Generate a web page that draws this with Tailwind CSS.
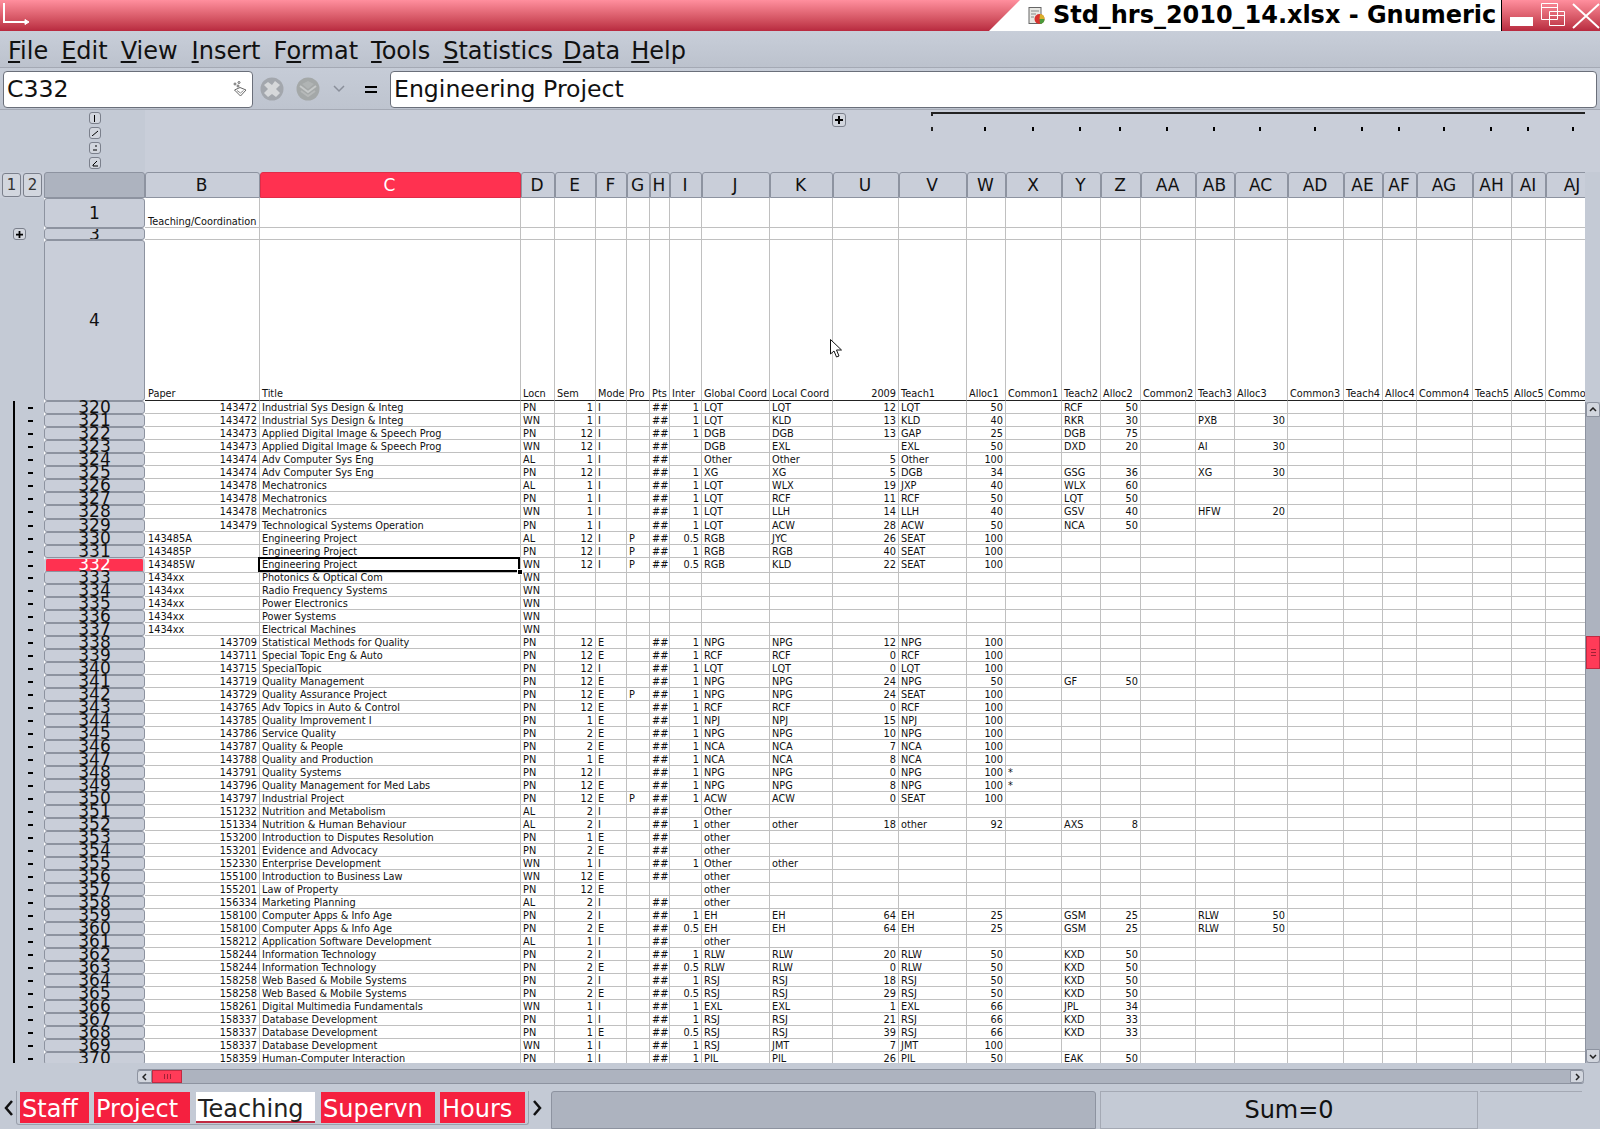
<!DOCTYPE html>
<html lang="en">
<head>
    <meta charset="UTF-8">
    <script src="https://cdn.jsdelivr.net/npm/@tailwindcss/browser@4"></script>
    <title>Std_hrs_2010_14.xlsx - Gnumeric</title>
</head>
<body class="relative w-[1600px] h-[1129px] overflow-hidden flex flex-col bg-[#c4cad5] font-['DejaVu_Sans',sans-serif] text-[#111]">

<!-- title bar -->
<div class="h-[31px] flex bg-linear-to-b from-[#ff8f9e] to-[#b8293f]">
    <div class="w-[989px] pl-[3px] pt-[3px]">
        <svg width="26" height="24" viewBox="0 0 26 24" fill="none" stroke="#fff" stroke-width="2"><path d="M1 0V19H23"/><path d="M22 16.500L26 19L22 21.500Z" fill="#fff" stroke-width="1"/></svg>
    </div>
    <div class="w-[512px] bg-white flex items-center pl-[39px] [clip-path:polygon(31px_0,100%_0,100%_100%,0_100%)]">
        <svg width="17" height="18" viewBox="0 0 17 18" class="mr-[8px] shrink-0"><rect x="1" y="0.5" width="12" height="16" fill="#e8e8e4" stroke="#666"/><path d="M3 4H11M3 7H8M3 10H6" stroke="#888"/><circle cx="11.5" cy="12" r="5" fill="#d8322e"/><path d="M11.5 12L16.5 12A5 5 0 0 1 12 17Z" fill="#4a9a3a"/><path d="M11.5 12L12 7A5 5 0 0 1 16.5 12Z" fill="#d9b02c"/></svg>
        <span class="text-[24px] font-bold leading-[31px] tracking-[-0.03px] whitespace-nowrap text-black">Std_hrs_2010_14.xlsx - Gnumeric</span>
    </div>
    <div class="flex-1 border-l border-black relative">
        <svg width="98" height="31" viewBox="0 0 98 31" fill="none" stroke="#fff"><rect x="8" y="17" width="23" height="9" fill="#fff" stroke="none"/><path d="M39.500 3.500H55.500V19.500H39.500Z"/><path d="M39.500 7.500H55.500"/><path d="M47.500 11.500H62.500V25.500H47.500Z"/><path d="M47.500 15.500H62.500"/><path d="M71 4L97 28M97 4L71 28" stroke-width="2"/></svg>
    </div>
</div>

<!-- menu -->
<div class="h-[37px] flex items-center bg-linear-to-b from-[#c8ced9] to-[#bcc2cd] border-b border-[#a4a9b4] text-[24px] leading-[32px] whitespace-nowrap pt-[4px]">
    <span class="ml-[8px]"><u>F</u>ile</span>
    <span class="ml-[13px]"><u>E</u>dit</span>
    <span class="ml-[13px]"><u>V</u>iew</span>
    <span class="ml-[14px]"><u>I</u>nsert</span>
    <span class="ml-[13px]">F<u>o</u>rmat</span>
    <span class="ml-[13px]"><u>T</u>ools</span>
    <span class="ml-[13px]"><u>S</u>tatistics</span>
    <span class="ml-[10px]"><u>D</u>ata</span>
    <span class="ml-[11px]"><u>H</u>elp</span>
</div>

<!-- formula bar -->
<div class="h-[42px] flex items-center bg-linear-to-b from-[#c6ccd7] to-[#bec4cf] border-b border-[#a4a9b4] pl-[3px] pr-[3px] pt-px">
    <div class="w-[250px] h-[37px] bg-white border border-[#6a6f7a] rounded-[4px] flex items-center justify-between pl-[3px] pr-[5px] text-[23.6px]">
        <span class="mt-[2px]">C332</span>
        <svg width="14" height="16" viewBox="0 0 14 16" fill="none" stroke="#666"><circle cx="2" cy="3" r="1"/><circle cx="6" cy="1.500" r="1"/><circle cx="5" cy="5" r="1"/><path d="M1.500 9L7 6.500L13 9L7.500 15Z"/><path d="M4 9.500L7.500 12L10.500 9.500" stroke="#888"/></svg>
    </div>
    <svg width="24" height="24" viewBox="0 0 24 24" class="ml-[7px]"><circle cx="12" cy="12" r="11.500" fill="#a3a7ad"/><path d="M8 5L12 8L15 4L20 8L16 12L20 16L16 20L12 17L8 20L4 16L8 12L4 8Z" fill="#d6d8da"/></svg>
    <svg width="24" height="24" viewBox="0 0 24 24" class="ml-[12px]"><circle cx="12" cy="12" r="11.500" fill="#a4a8a8"/><path d="M4 9L12 15L20 9" fill="none" stroke="#c6c9c9" stroke-width="2"/><path d="M5 14L12 19L19 14" fill="none" stroke="#b6b9b9" stroke-width="2"/><path d="M6 7L12 4L18 7L12 12Z" fill="#b0b4b4"/></svg>
    <svg width="12" height="8" viewBox="0 0 12 8" fill="none" stroke="#8a8f9a" stroke-width="1.500" class="ml-[13px]"><path d="M1 1L6 6L11 1"/></svg>
    <span class="ml-[20px] w-[12px] flex flex-col gap-[3px]"><i class="block h-[2px] bg-black"></i><i class="block h-[2px] bg-black"></i></span>
    <div class="ml-[13px] flex-1 h-[37px] bg-white border border-[#6a6f7a] rounded-[4px] flex items-center pl-[3px] text-[23.6px] leading-[37px] whitespace-nowrap">Engineering Project</div>
</div>

<!-- column outline area -->
<div class="relative h-[62px] shrink-0 bg-[#c9ced9]">
    <div class="h-full grid grid-cols-[44px_101px_115px_261px_34px_41px_31px_23px_20px_32px_68px_63px_66px_68px_39px_56px_39px_40px_55px_39px_53px_56px_39px_34px_56px_39px_34px_54px]">
        <div class="bg-[#c4cad5]"></div>
        <div class="bg-[#c4cad5] flex flex-col items-center pt-[2px] gap-[3px]">
            <span class="w-[12px] h-[12px] rounded-[3px] border border-[#7b808c] bg-[#d2d6de] flex items-center justify-center"><i class="block w-px h-[7px] bg-black"></i></span>
            <span class="w-[12px] h-[12px] rounded-[3px] border border-[#7b808c] bg-[#d2d6de] flex items-center justify-center"><svg width="6" height="6" viewBox="0 0 6 6" stroke="#000"><path d="M0 6L6 1"/></svg></span>
            <span class="w-[12px] h-[12px] rounded-[3px] border border-[#7b808c] bg-[#d2d6de] flex items-center justify-center"><svg width="6" height="6" viewBox="0 0 6 6" stroke="#000"><path d="M1 5H5M3 1H5"/></svg></span>
            <span class="w-[12px] h-[12px] rounded-[3px] border border-[#7b808c] bg-[#d2d6de] flex items-center justify-center"><svg width="6" height="7" viewBox="0 0 6 7" fill="none" stroke="#000"><path d="M5 1L1 5V6H6"/></svg></span>
        </div>
        <div></div><div></div><div></div><div></div><div></div><div></div><div></div><div></div><div></div><div></div><div></div>
        <div></div>
        <div class="flex justify-center pt-[17px] pr-[3px]"><i class="block w-[2px] h-[4px] bg-black"></i></div>
        <div class="flex justify-center pt-[17px] pr-[3px]"><i class="block w-[2px] h-[4px] bg-black"></i></div>
        <div class="flex justify-center pt-[17px] pr-[3px]"><i class="block w-[2px] h-[4px] bg-black"></i></div>
        <div class="flex justify-center pt-[17px] pr-[3px]"><i class="block w-[2px] h-[4px] bg-black"></i></div>
        <div class="flex justify-center pt-[17px] pr-[3px]"><i class="block w-[2px] h-[4px] bg-black"></i></div>
        <div class="flex justify-center pt-[17px] pr-[3px]"><i class="block w-[2px] h-[4px] bg-black"></i></div>
        <div class="flex justify-center pt-[17px] pr-[3px]"><i class="block w-[2px] h-[4px] bg-black"></i></div>
        <div class="flex justify-center pt-[17px] pr-[3px]"><i class="block w-[2px] h-[4px] bg-black"></i></div>
        <div class="flex justify-center pt-[17px] pr-[3px]"><i class="block w-[2px] h-[4px] bg-black"></i></div>
        <div class="flex justify-center pt-[17px] pr-[3px]"><i class="block w-[2px] h-[4px] bg-black"></i></div>
        <div class="flex justify-center pt-[17px] pr-[3px]"><i class="block w-[2px] h-[4px] bg-black"></i></div>
        <div class="flex justify-center pt-[17px] pr-[3px]"><i class="block w-[2px] h-[4px] bg-black"></i></div>
        <div class="flex justify-center pt-[17px] pr-[3px]"><i class="block w-[2px] h-[4px] bg-black"></i></div>
        <div class="flex justify-start pt-[17px] pl-[26px]"><i class="block w-[2px] h-[4px] bg-black"></i></div>
    </div>
    <span class="absolute left-[832px] top-[3px] w-[14px] h-[14px] rounded-[3px] border border-[#7b808c] bg-[#d2d6de] flex items-center justify-center"><svg width="8" height="8" viewBox="0 0 8 8" fill="#000"><path d="M3 0H5V3H8V5H5V8H3V5H0V3H3Z"/></svg></span>
    <div class="absolute left-[931px] top-[2px] w-[654px] h-[2px] bg-[#222]"></div>
    <div class="absolute left-[931px] top-[2px] w-[2px] h-[4px] bg-[#222]"></div>
    <div class="absolute left-[931px] top-[17px] w-[2px] h-[4px] bg-[#222]"></div>
</div>

<!-- sheet -->
<div class="h-[891px] shrink-0 flex">
    <div class="w-[1585px] overflow-hidden bg-white">
        <div class="h-[26px] grid grid-cols-[44px_101px_115px_261px_34px_41px_31px_23px_20px_32px_68px_63px_66px_68px_39px_56px_39px_40px_55px_39px_53px_56px_39px_34px_56px_39px_34px_54px] bg-[#c9ced9] text-[17px] leading-[24px] text-center" id="colhead">
            <div class="flex gap-[2px] pl-[2px] pt-px text-[#333]">
                <span class="w-[19px] h-[24px] rounded-[3px] border border-[#7b808c] bg-[#d2d6de] text-[15px] leading-[22px]">1</span>
                <span class="w-[19px] h-[24px] rounded-[3px] border border-[#7b808c] bg-[#d2d6de] text-[15px] leading-[22px]">2</span>
            </div>
            <div class="rounded-t-[3px] border border-[#8d93a0] bg-[#adb3bf]"></div>
        </div>
        <div id="rows"></div>
    </div>
    <div class="w-[15px] flex flex-col">
        <div class="h-[230px] shrink-0"></div>
        <div class="flex-1 flex flex-col bg-[#adb3bf] border-l border-[#8d93a0]">
            <div class="h-[15px] shrink-0 rounded-t-[3px] border border-[#8d93a0] bg-[#d2d6de] flex items-center justify-center"><svg width="8" height="5" viewBox="0 0 8 5" fill="none" stroke="#222" stroke-width="1.500"><path d="M1 4L4 1L7 4"/></svg></div>
            <div class="h-[219px] shrink-0"></div>
            <div class="h-[33px] shrink-0 bg-[#ff3b58] border border-[#c02a42] flex flex-col items-center justify-center gap-[2px]"><i class="block w-[5px] h-px bg-[#a02035]"></i><i class="block w-[5px] h-px bg-[#a02035]"></i><i class="block w-[5px] h-px bg-[#a02035]"></i></div>
            <div class="flex-1"></div>
            <div class="h-[14px] shrink-0 rounded-b-[3px] border border-[#8d93a0] bg-[#d2d6de] flex items-center justify-center"><svg width="8" height="5" viewBox="0 0 8 5" fill="none" stroke="#222" stroke-width="1.500"><path d="M1 1L4 4L7 1"/></svg></div>
        </div>
    </div>
</div>

<!-- horizontal scrollbar -->
<div class="h-[28px] shrink-0 pt-[6px] pl-[137px] pr-[16px]">
    <div class="h-[15px] flex bg-[#adb3bf] border-y border-[#8d93a0] rounded-[3px]">
        <div class="w-[15px] rounded-l-[3px] border border-[#8d93a0] bg-[#d2d6de] flex items-center justify-center"><svg width="5" height="8" viewBox="0 0 5 8" fill="none" stroke="#222" stroke-width="1.500"><path d="M4 1L1 4L4 7"/></svg></div>
        <div class="w-[30px] bg-[#ff3b58] border border-[#c02a42] flex items-center justify-center gap-[2px]"><i class="block w-px h-[5px] bg-[#a02035]"></i><i class="block w-px h-[5px] bg-[#a02035]"></i><i class="block w-px h-[5px] bg-[#a02035]"></i></div>
        <div class="flex-1"></div>
        <div class="w-[14px] rounded-r-[3px] border border-[#8d93a0] bg-[#d2d6de] flex items-center justify-center"><svg width="5" height="8" viewBox="0 0 5 8" fill="none" stroke="#222" stroke-width="1.500"><path d="M1 1L4 4L1 7"/></svg></div>
    </div>
</div>

<!-- tabs and status -->
<div class="flex-1 flex items-start">
    <div class="w-[16px] h-[34px] flex items-center justify-center"><svg width="9" height="16" viewBox="0 0 9 16" fill="none" stroke="#111" stroke-width="2.500"><path d="M8 1L2 8L8 15"/></svg></div>
    <div class="w-[513px] h-[34px] flex gap-[5px] pl-[3px] pt-px border-x border-b border-[#9aa0ac] rounded-b-[3px] text-[24px] leading-[35px] whitespace-nowrap">
        <span class="w-[69px] h-[31px] pl-[2px] bg-[#f5203f] text-white">Staff</span>
        <span class="w-[96px] h-[31px] pl-[2px] bg-[#f5203f] text-white">Project</span>
        <span class="w-[119px] h-[31px] pl-[2px] bg-white text-[#222] border-b-2 border-[#c02a42] ml-px">Teaching</span>
        <span class="w-[114px] h-[31px] pl-[2px] bg-[#f5203f] text-white ml-px">Supervn</span>
        <span class="w-[85px] h-[31px] pl-[2px] bg-[#f5203f] text-white">Hours</span>
    </div>
    <div class="w-[16px] h-[34px] flex items-center justify-center"><svg width="9" height="16" viewBox="0 0 9 16" fill="none" stroke="#111" stroke-width="2.500"><path d="M1 1L7 8L1 15"/></svg></div>
    <div class="w-[545px] h-[38px] ml-[6px] bg-[#adb3bf] border border-[#8d93a0] rounded-t-[3px]"></div>
    <div class="w-[378px] h-[38px] ml-[4px] border border-[#a4a9b4] flex items-center justify-center text-[24px]">Sum=0</div>
    <div class="w-[102px] h-px ml-[2px] bg-[#a4a9b4]"></div>
</div>

<!-- mouse pointer -->
<svg class="absolute left-[830px] top-[339px]" width="13" height="19" viewBox="0 0 13 19"><path d="M0.500 0.500V15L4 12L6.500 18L9 17L6.500 11H11.500Z" fill="#fff" stroke="#111"/></svg>

<script>
    const GRID = "grid grid-cols-[44px_101px_115px_261px_34px_41px_31px_23px_20px_32px_68px_63px_66px_68px_39px_56px_39px_40px_55px_39px_53px_56px_39px_34px_56px_39px_34px_54px]"
    const CELL = "border-r border-b border-[#c0c0c0] overflow-hidden whitespace-nowrap px-[2px] text-[9.75px] leading-[14px] text-[#111]"
    const RIGHT = "text-right"
    const cols = ["B","C","D","E","F","G","H","I","J","K","U","V","W","X","Y","Z","AA","AB","AC","AD","AE","AF","AG","AH","AI","AJ"]

    // one line per row, columns in sheet order from B
    const data = `320|143472|Industrial Sys Design & Integ|PN|1|I||##|1|LQT|LQT|12|LQT|50||RCF|50
321|143472|Industrial Sys Design & Integ|WN|1|I||##|1|LQT|KLD|13|KLD|40||RKR|30||PXB|30
322|143473|Applied Digital Image & Speech Prog|PN|12|I||##|1|DGB|DGB|13|GAP|25||DGB|75
323|143473|Applied Digital Image & Speech Prog|WN|12|I||##||DGB|EXL||EXL|50||DXD|20||AI|30
324|143474|Adv Computer Sys Eng|AL|1|I||##||Other|Other|5|Other|100
325|143474|Adv Computer Sys Eng|PN|12|I||##|1|XG|XG|5|DGB|34||GSG|36||XG|30
326|143478|Mechatronics|AL|1|I||##|1|LQT|WLX|19|JXP|40||WLX|60
327|143478|Mechatronics|PN|1|I||##|1|LQT|RCF|11|RCF|50||LQT|50
328|143478|Mechatronics|WN|1|I||##|1|LQT|LLH|14|LLH|40||GSV|40||HFW|20
329|143479|Technological Systems Operation|PN|1|I||##|1|LQT|ACW|28|ACW|50||NCA|50
330|143485A|Engineering Project|AL|12|I|P|##|0.5|RGB|JYC|26|SEAT|100
331|143485P|Engineering Project|PN|12|I|P|##|1|RGB|RGB|40|SEAT|100
332|143485W|Engineering Project|WN|12|I|P|##|0.5|RGB|KLD|22|SEAT|100
333|1434xx|Photonics & Optical Com|WN
334|1434xx|Radio Frequency Systems|WN
335|1434xx|Power Electronics|WN
336|1434xx|Power Systems|WN
337|1434xx|Electrical Machines|WN
338|143709|Statistical Methods for Quality|PN|12|E||##|1|NPG|NPG|12|NPG|100
339|143711|Special Topic Eng & Auto|PN|12|E||##|1|RCF|RCF|0|RCF|100
340|143715|SpecialTopic|PN|12|I||##|1|LQT|LQT|0|LQT|100
341|143719|Quality Management|PN|12|E||##|1|NPG|NPG|24|NPG|50||GF|50
342|143729|Quality Assurance Project|PN|12|E|P|##|1|NPG|NPG|24|SEAT|100
343|143765|Adv Topics in Auto & Control|PN|12|E||##|1|RCF|RCF|0|RCF|100
344|143785|Quality Improvement I|PN|1|E||##|1|NPJ|NPJ|15|NPJ|100
345|143786|Service Quality|PN|2|E||##|1|NPG|NPG|10|NPG|100
346|143787|Quality & People|PN|2|E||##|1|NCA|NCA|7|NCA|100
347|143788|Quality and Production|PN|1|E||##|1|NCA|NCA|8|NCA|100
348|143791|Quality Systems|PN|12|I||##|1|NPG|NPG|0|NPG|100|*
349|143796|Quality Management for Med Labs|PN|12|E||##|1|NPG|NPG|8|NPG|100|*
350|143797|Industrial Project|PN|12|E|P|##|1|ACW|ACW|0|SEAT|100
351|151232|Nutrition and Metabolism|AL|2|I||##||Other
352|151334|Nutrition & Human Behaviour|AL|2|I||##|1|other|other|18|other|92||AXS|8
353|153200|Introduction to Disputes Resolution|PN|1|E||##||other
354|153201|Evidence and Advocacy|PN|2|E||##||other
355|152330|Enterprise Development|WN|1|I||##|1|Other|other
356|155100|Introduction to Business Law|WN|12|E||##||other
357|155201|Law of Property|PN|12|E||||other
358|156334|Marketing Planning|AL|2|I||##||other
359|158100|Computer Apps & Info Age|PN|2|I||##|1|EH|EH|64|EH|25||GSM|25||RLW|50
360|158100|Computer Apps & Info Age|PN|2|E||##|0.5|EH|EH|64|EH|25||GSM|25||RLW|50
361|158212|Application Software Development|AL|1|I||##||other
362|158244|Information Technology|PN|2|I||##|1|RLW|RLW|20|RLW|50||KXD|50
363|158244|Information Technology|PN|2|E||##|0.5|RLW|RLW|0|RLW|50||KXD|50
364|158258|Web Based & Mobile Systems|PN|2|I||##|1|RSJ|RSJ|18|RSJ|50||KXD|50
365|158258|Web Based & Mobile Systems|PN|2|E||##|0.5|RSJ|RSJ|29|RSJ|50||KXD|50
366|158261|Digital Multimedia Fundamentals|WN|1|I||##|1|EXL|EXL|1|EXL|66||JPL|34
367|158337|Database Development|PN|1|I||##|1|RSJ|RSJ|21|RSJ|66||KXD|33
368|158337|Database Development|PN|1|E||##|0.5|RSJ|RSJ|39|RSJ|66||KXD|33
369|158337|Database Development|WN|1|I||##|1|RSJ|JMT|7|JMT|100
370|158359|Human-Computer Interaction|PN|1|I||##|1|PIL|PIL|26|PIL|50||EAK|50`.split("\n")

    const esc = (s) => s.replace(/&/g, "&amp;")

    // column letters
    let head = ""
    cols.forEach((c) => {
        if (c == "C") {
            head += `<div class="rounded-t-[3px] border border-[#e02c48] bg-[#ff3150] text-white pr-[2px]">${c}</div>`
        } else {
            head += `<div class="rounded-t-[3px] border border-[#8d93a0] bg-[#c9ced9] pr-[2px] overflow-hidden">${c}</div>`
        }
    })
    document.getElementById("colhead").insertAdjacentHTML("beforeend", head)

    function gutter(inner) {
        return `<div class="bg-[#c4cad5]">${inner}</div>`
    }
    function rowHead(n, box) {
        return `<div class="${box} rounded-[3px] border border-[#8d93a0] bg-[#c9ced9] text-[17px] text-center">${n}</div>`
    }

    let html = ""

    // rows 1, 3 and 4 are the tall heading rows
    let r1 = `<div class="h-[30px] ${GRID}">` + gutter("") + rowHead("1", "leading-[28px]")
    cols.forEach((c) => {
        r1 += `<div class="${CELL} flex items-end ${c == "B" ? "pl-[3px]" : ""}"><span class="leading-[10px]">${c == "B" ? "Teaching/Coordination" : ""}</span></div>`
    })
    html += r1 + "</div>"

    let r3 = `<div class="h-[12px] ${GRID}">` + gutter(`<span class="flex items-center justify-center ml-[13px] w-[13px] h-[12px] rounded-[3px] border border-[#7b808c] bg-[#d2d6de]"><svg width="7" height="7" viewBox="0 0 8 8" fill="#000"><path d="M3 0H5V3H8V5H5V8H3V5H0V3H3Z"/></svg></span>`) + rowHead("3", "leading-[10px] overflow-hidden")
    cols.forEach(() => { r3 += `<div class="${CELL}"></div>` })
    html += r3 + "</div>"

    const titles = ["Paper","Title","Locn","Sem","Mode","Pro","Pts","Inter","Global Coord","Local Coord","2009","Teach1","Alloc1","Common1","Teach2","Alloc2","Common2","Teach3","Alloc3","Common3","Teach4","Alloc4","Common4","Teach5","Alloc5","Common5"]
    let r4 = `<div class="h-[161px] ${GRID}">` + gutter("") + rowHead("4", "leading-[159px]")
    titles.forEach((t) => {
        r4 += `<div class="border-r border-b border-r-[#c0c0c0] border-b-[#222] overflow-hidden whitespace-nowrap px-[2px] text-[9.75px] leading-[12px] flex items-end ${t == "2009" ? "justify-end" : ""} ${t == "Paper" ? "pl-[3px]" : ""}">${t}</div>`
    })
    html += r4 + "</div>"

    data.forEach((line) => {
        const parts = line.split("|")
        const n = parts[0]
        const tall = n == "328" ? "h-[14px]" : "h-[13px]"
        let row = `<div class="${tall} ${GRID}">`
        row += `<div class="bg-[#c4cad5]"><div class="ml-[13px] h-full border-l-2 border-black flex items-center justify-end pr-[11px]"><i class="block w-[5px] h-[2px] bg-black"></i></div></div>`
        if (n == "332") {
            row += `<div class="rounded-[3px] border-x-2 border-y border-[#c9ced9] bg-[#ff3150] text-white text-[17px] leading-[11px] text-center overflow-hidden">${n}</div>`
        } else {
            row += rowHead(n, "leading-[11px]")
        }
        cols.forEach((c, i) => {
            const v = parts[i + 1] || ""
            const num = /^[\d.]+$/.test(v)
            if (n == "332" && c == "C") {
                row += `<div class="${CELL} relative z-10 !overflow-visible">${esc(v)}<span class="absolute left-[-2px] top-[-1px] right-0 bottom-0 border-2 border-black"></span><span class="absolute right-[-3px] bottom-[-3px] w-[6px] h-[6px] bg-black border border-white"></span></div>`
            } else {
                row += `<div class="${CELL} ${num ? RIGHT : ""} ${c == "B" && !num ? "pl-[3px]" : ""}">${esc(v)}</div>`
            }
        })
        html += row + "</div>"
    })
    document.getElementById("rows").innerHTML = html
</script>
</body>
</html>
